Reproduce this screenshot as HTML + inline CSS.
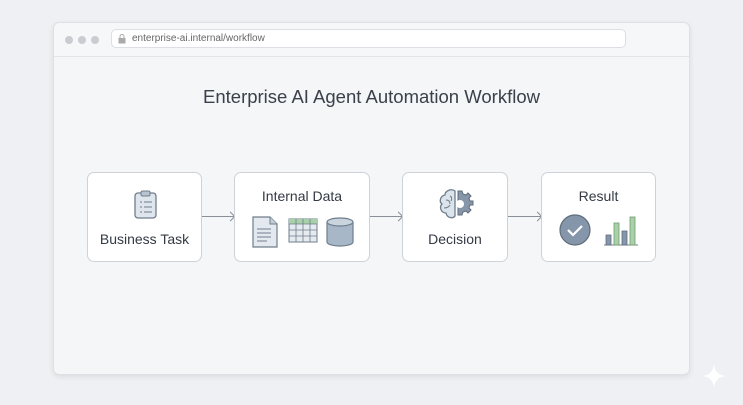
<!DOCTYPE html><html><head><style>
body{margin:0;width:743px;height:405px;background:#eef0f3;font-family:"Liberation Sans",sans-serif;position:relative;overflow:hidden}
.win{position:absolute;left:53px;top:22px;width:637px;height:353px;background:#f4f6f8;border:1px solid #dde0e4;border-radius:6px;box-shadow:0 2px 6px rgba(0,0,0,.08);box-sizing:border-box}
.bar{position:absolute;left:0;top:0;right:0;height:33px;border-bottom:1px solid #e2e5e8;background:#f6f7f9;border-radius:6px 6px 0 0}
.dot{position:absolute;top:13px;width:8px;height:8px;border-radius:50%;background:#c9ccd1}
.url{position:absolute;left:57px;top:6px;width:515px;height:19px;border:1px solid #dcdfe3;border-radius:5px;background:#fff;box-sizing:border-box;font-size:10px;color:#666;line-height:17px;padding-left:20px}
h1{position:absolute;left:0;right:0;top:86px;margin:0;text-align:center;font-weight:normal;font-size:18.5px;color:#3a414b}
.box{position:absolute;top:172px;height:90px;background:#fff;border:1px solid #cfd3d8;border-radius:7px;box-sizing:border-box;text-align:center;color:#333a44;font-size:14px}
.ar{position:absolute;top:216px;height:1px;background:#8a9099}
.ar:after{content:"";position:absolute;right:0;top:-3px;width:6px;height:6px;border-top:1px solid #8a9099;border-right:1px solid #8a9099;transform:rotate(45deg)}
</style></head><body>
<div class="win">
<div class="bar"><div class="dot" style="left:11px"></div><div class="dot" style="left:24px"></div><div class="dot" style="left:37px"></div>
<div class="url"><svg style="position:absolute;left:6px;top:4px" width="8" height="10"><rect x="0.5" y="4" width="7" height="5.5" fill="#aaa"/><path d="M2 4V2.5a2 2 0 0 1 4 0V4" fill="none" stroke="#aaa"/></svg>enterprise-ai.internal/workflow</div></div>
</div>
<h1>Enterprise AI Agent Automation Workflow</h1>
<div class="box" style="left:87px;width:115px"><svg style="position:absolute;left:45px;top:17px" width="26" height="30"><rect x="2" y="3" width="21" height="25" rx="3" fill="#dfe5ec" stroke="#6f7d8c" stroke-width="1.3"/><rect x="8" y="1" width="9" height="5" rx="1.5" fill="#b8c3cf" stroke="#6f7d8c"/><path d="M7 12h2M11 12h8M7 17h2M11 17h8M7 22h2M11 22h8" stroke="#6f7d8c"/></svg><div style="position:absolute;top:58px;width:100%">Business Task</div></div>
<div class="ar" style="left:202px;width:32px"></div>
<div class="box" style="left:234px;width:136px"><div style="position:absolute;top:15px;width:100%">Internal Data</div>
<svg style="position:absolute;left:16px;top:42px" width="112" height="34"><path d="M2 2h17l7 7v23H2z" fill="#e4e9ef" stroke="#6f7d8c" stroke-width="1.2"/><path d="M19 2v7h7" fill="#c5ced8" stroke="#6f7d8c"/><path d="M6 14h14M6 18h14M6 22h14M6 26h10" stroke="#6f7d8c"/>
<rect x="38" y="4" width="28" height="23" fill="#e6ebf0" stroke="#6f7d8c"/><rect x="38" y="4" width="28" height="5" fill="#a9d1a9"/><path d="M38 9h28M38 15h28M38 21h28M45 4v23M52 4v23M59 4v23" stroke="#6f7d8c" stroke-width=".8"/>
<path d="M76 7v20a13 4 0 0 0 26 0V7" fill="#a8b7c8" stroke="#6f7d8c" stroke-width="1.2"/><ellipse cx="89" cy="7" rx="13" ry="4" fill="#c9d4df" stroke="#6f7d8c" stroke-width="1.2"/></svg></div>
<div class="ar" style="left:370px;width:32px"></div>
<div class="box" style="left:402px;width:106px"><svg style="position:absolute;left:35px;top:15px" width="38" height="34"><path d="M17 3c-4-3-10 0-10 4-5 1-6 7-3 9-3 3-1 9 4 9 1 5 7 6 9 3z" fill="#dbe4ec" stroke="#6f7d8c" stroke-width="1.3"/><path d="M8 12c3 0 4 2 4 4M6 20c3 0 5-1 6-3M12 8c2 1 2 3 1 5" fill="none" stroke="#6f7d8c"/><path d="M20 3h4l1 3 3 1 2-2 3 3-2 2 1 3h3v4h-3l-1 3 2 2-3 3-2-2-3 1-1 3h-4z" fill="#8796a8" stroke="#5f6d7c"/><circle cx="22" cy="16" r="4" fill="#fff"/></svg><div style="position:absolute;top:58px;width:100%">Decision</div></div>
<div class="ar" style="left:508px;width:33px"></div>
<div class="box" style="left:541px;width:115px"><div style="position:absolute;top:15px;width:100%">Result</div>
<svg style="position:absolute;left:16px;top:40px" width="84" height="36"><circle cx="17" cy="17" r="15" fill="#8596aa" stroke="#5f6d7c" stroke-width="1.2"/><path d="M10 17l5 5 9-9" fill="none" stroke="#fff" stroke-width="2.2"/>
<path d="M46 32h34" stroke="#6f7d8c"/><rect x="48" y="22" width="5" height="10" fill="#8596aa" stroke="#5f6d7c" stroke-width=".8"/><rect x="56" y="10" width="5" height="22" fill="#a9d1a9" stroke="#6f9a70" stroke-width=".8"/><rect x="64" y="18" width="5" height="14" fill="#8596aa" stroke="#5f6d7c" stroke-width=".8"/><rect x="72" y="4" width="5" height="28" fill="#a9d1a9" stroke="#6f9a70" stroke-width=".8"/></svg></div>
<svg style="position:absolute;left:702px;top:364px" width="24" height="24"><path d="M12 0Q13 11 24 12Q13 13 12 24Q11 13 0 12Q11 11 12 0z" fill="#fff"/></svg>
</body></html>
